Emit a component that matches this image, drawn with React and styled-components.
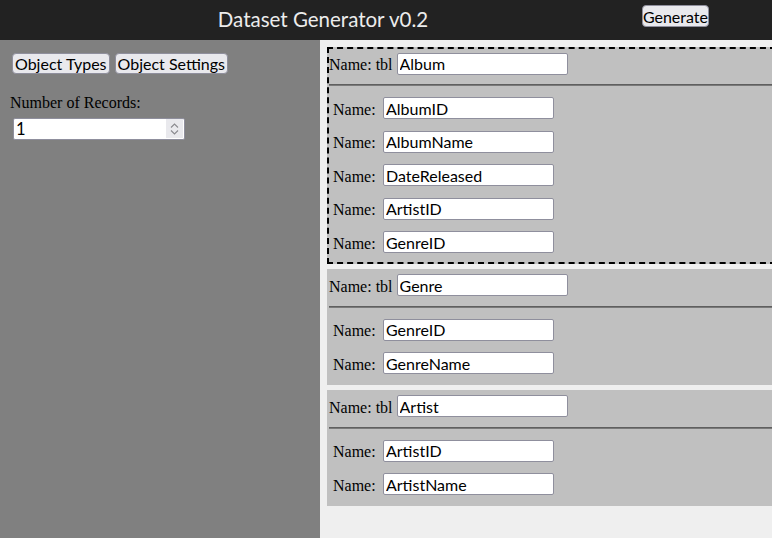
import React from 'react';
import styled, { createGlobalStyle } from 'styled-components';

const GlobalStyle = createGlobalStyle`
  html, body { margin: 0; padding: 0; height: 100%; overflow: hidden; }
  body { font-family: "Liberation Serif", serif; font-size: 16px; color: #000; }
  #root { height: 100%; }
`;

const Page = styled.div`
  display: grid;
  grid-template-rows: 40px 1fr;
  height: 100vh;
`;

const Header = styled.header`
  display: flex;
  align-items: flex-start;
  background: #222222;
`;

const Title = styled.h1`
  flex: 1;
  margin: 7px 0 0;
  padding-left: 4px;
  text-align: center;
  font: 400 20.5px/24px Lato, sans-serif;
  color: #ececec;
`;

const Button = styled.button`
  box-sizing: border-box;
  height: 21px;
  padding: 0 2px;
  font: 400 16px/19px Lato, sans-serif;
  color: #000;
  background: #e9e9ed;
  border: 1px solid #8f8f9d;
  border-radius: 4px;
  cursor: pointer;
`;

const GenerateButton = styled(Button)`
  height: 22px;
  padding: 0;
  margin: 5px 63px 0 0;
`;

const Body = styled.div`
  display: grid;
  grid-template-columns: 320px 1fr;
  min-height: 0;
`;

const Sidebar = styled.aside`
  background: #808080;
  padding-top: 13px;
`;

const ButtonRow = styled.div`
  display: flex;
  gap: 5px;
  padding-left: 12px;
`;

const SideLabel = styled.div`
  margin: 20px 0 0 10px;
  font: 400 16px "Liberation Serif", serif;
`;

const NumberBox = styled.div`
  box-sizing: border-box;
  display: flex;
  width: 172px;
  height: 22px;
  margin: 6px 0 0 13px;
  background: #fff;
  border: 1px solid #8f8f9d;
  border-radius: 2px;
`;

const NumberInput = styled.input`
  flex: 1;
  min-width: 0;
  border: none;
  outline: none;
  padding: 0 2px;
  font: 400 16.5px Lato, sans-serif;
  background: transparent;
  &::-webkit-inner-spin-button, &::-webkit-outer-spin-button { -webkit-appearance: none; margin: 0; }
  -moz-appearance: textfield;
`;

const Spinner = styled.div`
  display: flex;
  flex-direction: column;
  align-items: center;
  justify-content: center;
  gap: 2px;
  width: 17px;
  margin: 0 1px 1px 0;
  background: #e9e9ed;
`;

const Main = styled.main`
  display: flex;
  flex-direction: column;
  gap: 5px;
  padding: 7px 0 0 7px;
  background: #efefef;
  overflow: hidden;
`;

const TableBlock = styled.section`
  margin-right: -4px;
  padding-bottom: 2.5px;
  background: #c0c0c0;
  border: 2px ${p => (p.$selected ? 'dashed #000' : 'solid transparent')};
`;

const TableHeader = styled.div`
  display: flex;
  align-items: baseline;
  gap: 4px;
  padding: 3.5px 0;
`;

const Label = styled.span`
  font: 400 16px "Liberation Serif", serif;
  white-space: pre;
  width: ${p => p.$width || 'auto'};
`;

const TextInput = styled.input`
  box-sizing: border-box;
  width: 171px;
  height: 22px;
  padding: 0 2px;
  font: 400 16px Lato, sans-serif;
  color: #000;
  background: #fff;
  border: 1px solid #8f8f9d;
  border-radius: 2px;
  outline: none;
`;

const Divider = styled.hr`
  margin: 6px 0 5.5px;
  height: 0;
  border: 0;
  border-top: 1px solid #5f5f5f;
  border-bottom: 1px solid #7a7a7a;
`;

const FieldRow = styled.div`
  display: flex;
  align-items: baseline;
  padding: 5.75px 0 5.75px 4px;
`;

const Chevron = ({ up }) => (
  <svg width="9" height="5" viewBox="0 0 9 5">
    <path
      d={up ? 'M1 4.5 L4.5 1 L8 4.5' : 'M1 0.5 L4.5 4 L8 0.5'}
      fill="none"
      stroke="#8a8a8f"
      strokeWidth="1.1"
    />
  </svg>
);

const tables = [
  { name: 'Album', selected: true, fields: ['AlbumID', 'AlbumName', 'DateReleased', 'ArtistID', 'GenreID'] },
  { name: 'Genre', fields: ['GenreID', 'GenreName'] },
  { name: 'Artist', fields: ['ArtistID', 'ArtistName'] },
];

export default function App() {
  return (
    <>
      <GlobalStyle />
      <Page>
        <Header>
          <Title>Dataset Generator v0.2</Title>
          <GenerateButton>Generate</GenerateButton>
        </Header>
        <Body>
          <Sidebar>
            <ButtonRow>
              <Button>Object Types</Button>
              <Button>Object Settings</Button>
            </ButtonRow>
            <SideLabel>Number of Records:</SideLabel>
            <NumberBox>
              <NumberInput type="number" defaultValue={1} />
              <Spinner>
                <Chevron up />
                <Chevron />
              </Spinner>
            </NumberBox>
          </Sidebar>
          <Main>
            {tables.map(t => (
              <TableBlock key={t.name} $selected={t.selected}>
                <TableHeader>
                  <Label>Name: tbl</Label>
                  <TextInput defaultValue={t.name} />
                </TableHeader>
                <Divider />
                {t.fields.map(f => (
                  <FieldRow key={f}>
                    <Label $width="50px">Name: </Label>
                    <TextInput defaultValue={f} />
                  </FieldRow>
                ))}
              </TableBlock>
            ))}
          </Main>
        </Body>
      </Page>
    </>
  );
}
